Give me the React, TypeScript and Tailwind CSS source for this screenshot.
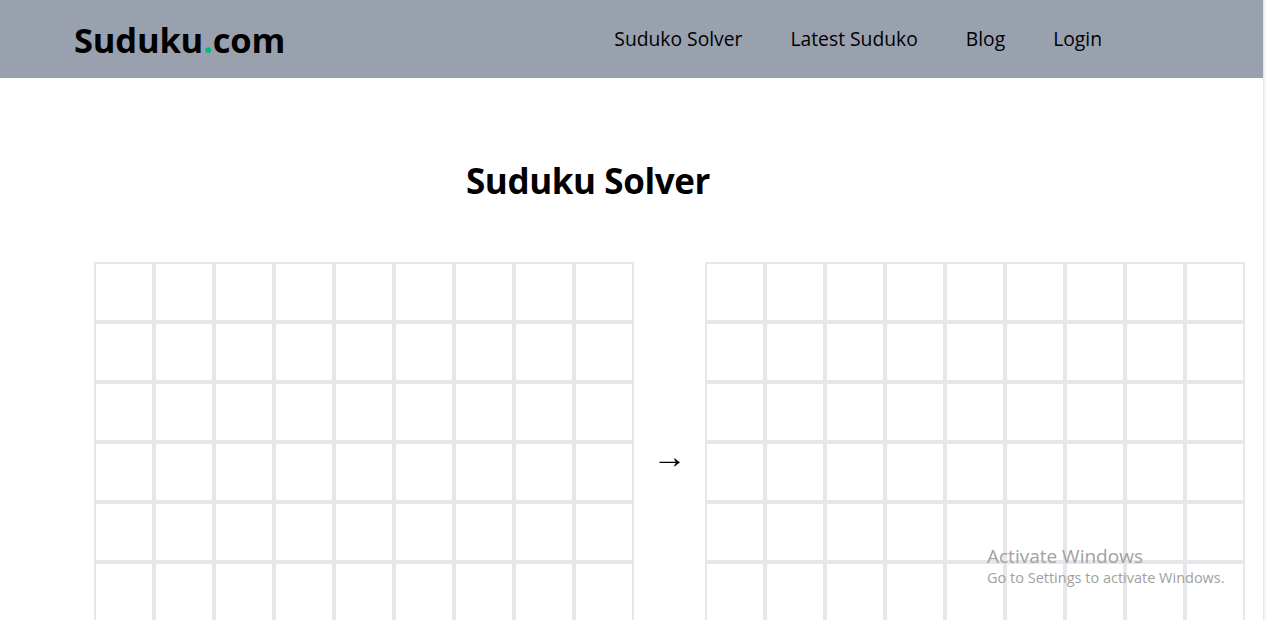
import React from 'react';

const cells = Array(81).fill(0);

const Board: React.FC = () => (
    <div className="grid grid-cols-9 w-[540px] shrink-0">
        {cells.map((_, i) => (
            <div key={i} className="w-[60px] h-[60px] border-2 border-gray-200 bg-white" />
        ))}
    </div>
);

const App: React.FC = () => {
    return (
        <div className="relative h-[620px] overflow-hidden flex bg-white" style={{ fontFamily: '"Open Sans", "Noto Sans", sans-serif' }}>
            <div className="w-[1263px] shrink-0">
                {/* Header */}
                <header className="h-[78px] bg-gray-400 flex items-center justify-between pl-[74px] pr-[161px]">
                    <div className="text-[34.5px] font-bold text-black tracking-[-0.2px] leading-none pt-[2px]">
                        Suduku<span className="text-emerald-500">.</span>com
                    </div>
                    <nav className="flex items-center gap-[48px] text-[19.3px] font-medium text-black pt-[1px]">
                        <a href="#">Suduko Solver</a>
                        <a href="#">Latest Suduko</a>
                        <a href="#">Blog</a>
                        <a href="#">Login</a>
                    </nav>
                </header>

                {/* Title */}
                <div className="w-[1176px] text-center pt-[79px]">
                    <h1 className="text-[35px] font-bold text-black leading-[48px] tracking-[-0.4px]">Suduku Solver</h1>
                </div>

                {/* Boards */}
                <div className="flex items-start pl-[94px] pt-[57px]">
                    <Board />
                    <div className="w-[71px] shrink-0 flex justify-center pt-[176px] text-[34px] leading-none text-black">→</div>
                    <Board />
                </div>
            </div>
            <div className="w-[3px] bg-gray-100 border-l border-gray-200" />

            {/* Windows watermark */}
            <div className="absolute left-[987px] top-[545px] text-neutral-400 leading-tight">
                <p className="text-[19px]">Activate Windows</p>
                <p className="text-[14.5px]">Go to Settings to activate Windows.</p>
            </div>
        </div>
    );
};

export default App;
